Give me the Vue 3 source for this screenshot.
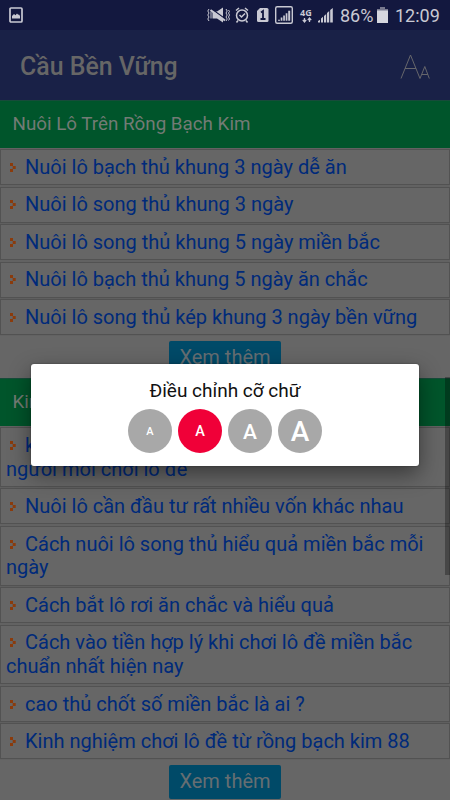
<script setup>
const sections = [
  {
    title: 'Nuôi Lô Trên Rồng Bạch Kim',
    items: [
      ['Nuôi lô bạch thủ khung 3 ngày dễ ăn'],
      ['Nuôi lô song thủ khung 3 ngày'],
      ['Nuôi lô song thủ khung 5 ngày miền bắc'],
      ['Nuôi lô bạch thủ khung 5 ngày ăn chắc'],
      ['Nuôi lô song thủ kép khung 3 ngày bền vững'],
    ],
  },
  {
    title: 'Kinh Nghiệm Chơi Lô Đề',
    items: [
      ['kinh nghiệm nuôi lô khung cho', 'người mới chơi lô đề'],
      ['Nuôi lô cần đầu tư rất nhiều vốn khác nhau'],
      ['Cách nuôi lô song thủ hiểu quả miền bắc mỗi', 'ngày'],
      ['Cách bắt lô rơi ăn chắc và hiểu quả'],
      ['Cách vào tiền hợp lý khi chơi lô đề miền bắc', 'chuẩn nhất hiện nay'],
      ['cao thủ chốt số miền bắc là ai ?'],
      ['Kinh nghiệm chơi lô đề từ rồng bạch kim 88'],
    ],
  },
]
const sizes = ['s', 'm', 'l', 'xl']
</script>

<template>
  <div class="screen">
    <div class="status">
      <svg class="pic" width="14" height="16" viewBox="0 0 14 16">
        <rect x="1" y="1" width="12" height="14" rx="1" fill="none" stroke="#c9c9d3" stroke-width="1.7" />
        <path d="M3 11.500V9l2-2 1.500 1.200L8 6.500l1.200 1.300L10 7.500l1 1.500v2.500z" fill="#c9c9d3" />
      </svg>
      <svg class="icons" width="132" height="20" viewBox="0 0 132 20">
        <g fill="#c9c9d3" stroke="#c9c9d3">
          <path d="M5.500 6.500H10L16 2.500v15l-6-4H5.500z" stroke="none" />
          <path d="M2 4L.8 6 2 8 .8 10 2 12 .8 14 2 16M19 4l1.200 2L19 8l1.200 2-1.200 2 1.200 2-1.200 2M21.500 5l1 1.500-1 1.500 1 2-1 2 1 2-1 1.500M4 6.500v7" fill="none" />
          <path d="M4 3.500l15 11" stroke="#13183f" stroke-width="1.500" />
          <path d="M3.500 5l14.500 10.500" stroke-width="2" />
          <g fill="none" stroke-width="1.500">
            <circle cx="35" cy="10.500" r="5.500" />
            <path d="M29 5.500l3-2.500M41 5.500L38 3M31 15.500l-1.500 2M39 15.500l1.500 2M32.500 10l2 2 3.500-3.500" />
          </g>
          <path d="M50 6l3-3h7q1.500 0 1.500 1.500v11q0 1.500-1.500 1.500h-8.500Q50 17 50 15.500z" stroke="none" />
          <path d="M54 7.500l2-1.500v8m-2.500 0h5" fill="none" stroke="#13183f" stroke-width="1.800" />
          <rect x="68.700" y="1.700" width="16.600" height="16.600" rx="1.500" fill="none" stroke-width="1.400" />
          <path d="M71 15.700v-1h2v1zM73.700 15.700v-3.200h1.700v3.200zM76.200 15.700v-5.200h1.700v5.200zM78.700 15.700V8.200h1.700v7.500zM81.200 15.700V5.700h2v10z" stroke="none" />
          <path d="M97.500 13v4m-1.700-2.200l1.700 2.200 1.700-2.200M102.500 17v-4m-1.700 2.200l1.700-2.200 1.700 2.200" fill="none" stroke-width="1.300" />
          <path d="M111 17.500v-1.500l2-1.300v2.800zM114 17.500v-4l2-1.700v5.700zM117 17.500V11l2.200-2v8.500zM120 17.500V8l2.200-2v11.500zM123.200 17.500V5l2.600-2v14.500z" stroke="none" />
        </g>
        <text x="93" y="10.500" class="net">4G</text>
      </svg>
      <span class="pct">86%</span>
      <svg class="bat" width="11" height="16" viewBox="0 0 11 16"><path d="M3 0h5v2h3v14H0V2h3z" fill="#d6d6de" /><path d="M3 0h5v2h3v1.500H0V2h3z" fill="#77798e" /></svg>
      <span class="time">12:09</span>
    </div>
    <header class="bar">
      <h1>Cầu Bền Vững</h1>
      <svg width="30" height="26" viewBox="0 0 30 26" fill="none" stroke="#66666b" stroke-width="1">
        <path d="M1 24.500L10.500 1 20 24.500M5 14.500h11M20 24.500l4.800-12L29.300 24.500M22 20.500h6" />
      </svg>
    </header>
    <section v-for="s in sections" :key="s.title">
      <h2>{{ s.title }}</h2>
      <ul>
        <li v-for="i in s.items" :key="i[0]">
          <svg class="bullet" width="6" height="9" viewBox="0 0 6 9" fill="#8a3b0c"><rect width="3" height="3" /><rect width="3" height="3" x="2.700" y="3" /><rect width="3" height="3" y="6" /></svg><template v-for="(line, n) in i" :key="n"><br v-if="n" />{{ line }}</template>
        </li>
      </ul>
      <div class="more"><button>Xem thêm</button></div>
    </section>
    <div class="scroll"></div>
    <div class="dialog">
      <p>Điều chỉnh cỡ chữ</p>
      <div class="sizes">
        <span v-for="z in sizes" :key="z" :class="['dot', z]">A</span>
      </div>
    </div>
  </div>
</template>

<style>
body { margin: 0; background: #666; overflow: hidden; }
</style>
<style scoped>
* { box-sizing: border-box; }
.screen { position: relative; width: 450px; height: 800px; overflow: hidden; background: #666; font-family: Roboto, sans-serif; }
.status { display: flex; height: 30px; padding: 0 9px; align-items: center; background: #13183f; color: #c9c9d3; font-size: 18px; }
.icons { margin-left: 184px; flex: none; }
.net { font: 700 9px "Open Sans", sans-serif; stroke: none; fill: #c9c9d3; }
.pct { margin-left: 1px; width: 37px; white-space: nowrap; }
.bat { margin: 0 7px 0 0; flex: none; }
.time { white-space: nowrap; }
.bar { display: flex; height: 70px; padding: 3px 20px 0; align-items: center; justify-content: space-between; background: #192147; }
h1 { margin: 0; font-size: 24.900px; font-weight: 500; color: #666; }
h2 { height: 47.500px; margin: 0; padding: 0 12.500px; font-size: 18.800px; line-height: 48px; font-weight: 400; color: #737b75; background: #00552b; box-shadow: inset 0 1px #174b3a; }
ul { margin: 0; padding: 0; list-style: none; }
li { margin-top: 1.500px; padding: 5.900px 5px 4px; height: 36px; border: 1px solid #525252; box-shadow: 0 0 1px #555; font-size: 20px; line-height: 23.750px; color: #002a7a; white-space: nowrap; }
li:has(br) { height: 59.750px; }
.bullet { margin: 0 9px 2px 4px; vertical-align: baseline; }
.more { display: flex; height: 43px; padding-top: 5.500px; justify-content: center; align-items: flex-start; }
.more button { width: 112px; height: 34px; padding: 0 0 1px; border: 0; border-radius: 2px; background: #004a68; color: #666e72; font: 20px Roboto, sans-serif; }
.scroll { position: absolute; right: 0; top: 377px; width: 5px; height: 198px; background: rgba(0, 0, 0, .3); }
.dialog { position: absolute; left: 31px; top: 364px; width: 388px; height: 102px; padding-top: 15px; border-radius: 3px; background: #fff; box-shadow: 0 8px 22px rgba(0, 0, 0, .45), 0 0 2px rgba(0, 0, 0, .4); }
.dialog p { margin: 0; height: 24px; line-height: 24px; font-size: 19px; text-align: center; color: #111; }
.sizes { display: flex; justify-content: center; gap: 6px; margin-top: 6px; }
.dot { width: 44px; height: 44px; border-radius: 50%; background: #a8a8a8; color: #fff; display: flex; align-items: center; justify-content: center; font-weight: 500; padding-top: 1px; }
.s { font-size: 11px; }
.m { font-size: 14.500px; background: #f00038; }
.l { font-size: 21px; }
.xl { font-size: 28px; }
</style>
